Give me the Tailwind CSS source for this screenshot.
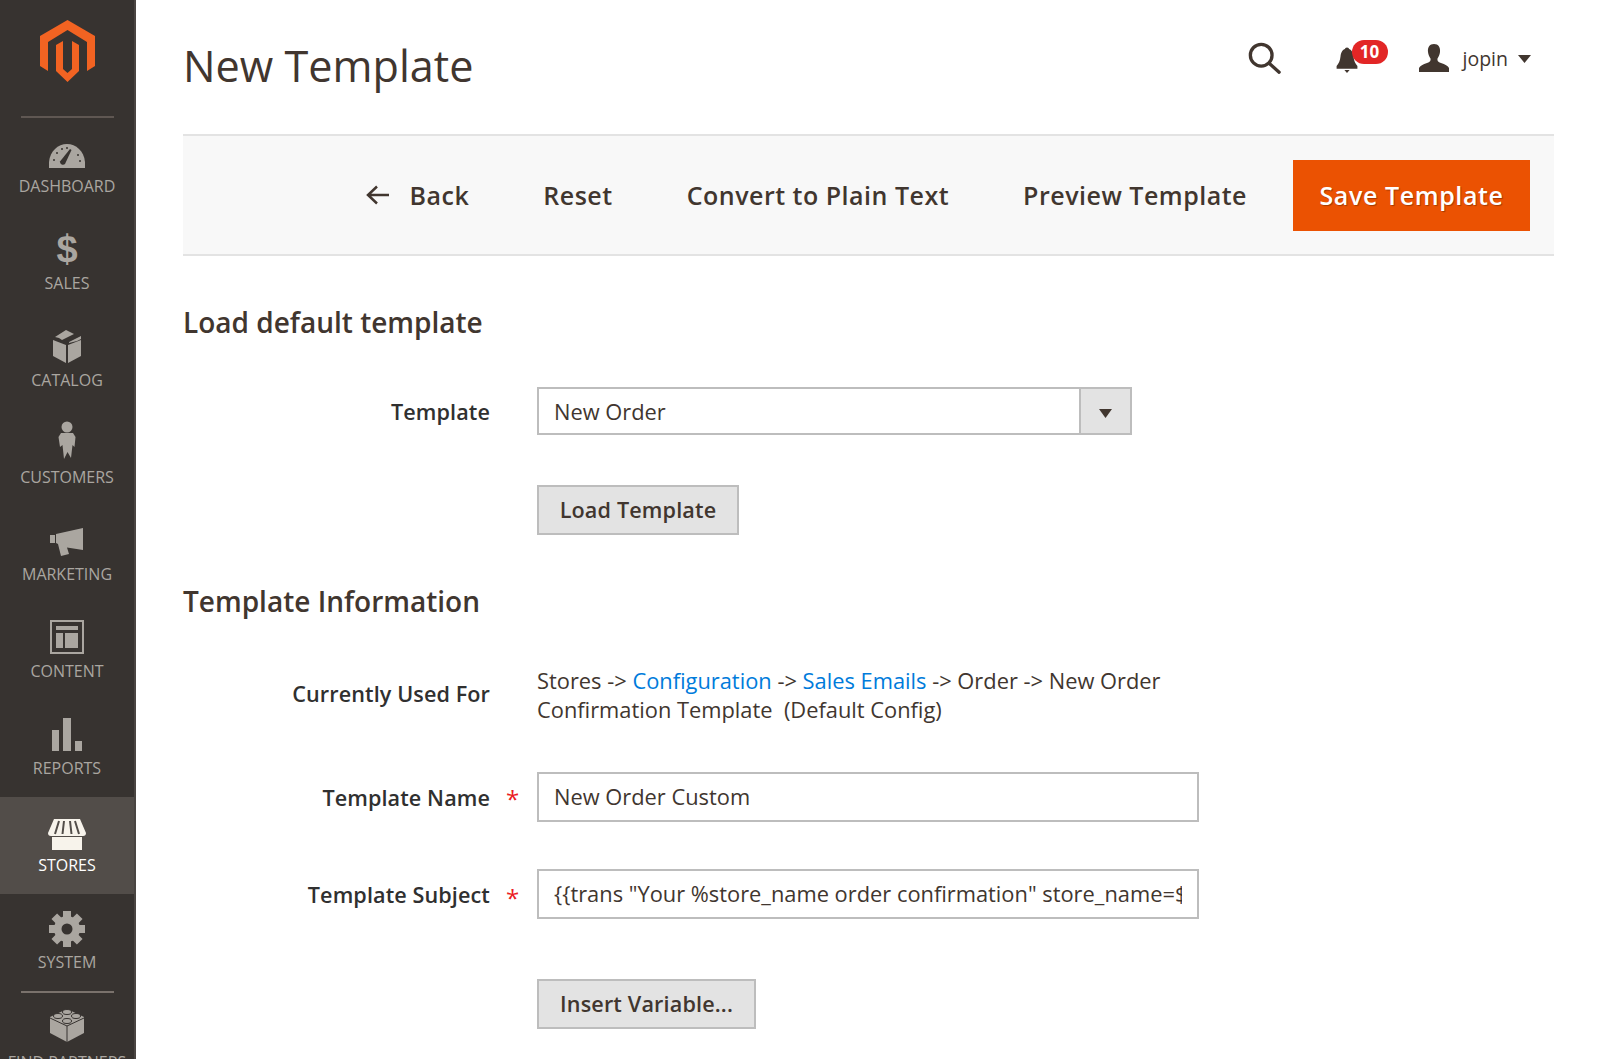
<!DOCTYPE html>
<html lang="en">
  <head>
    <meta charset="UTF-8" />
    <title>New Template</title>
    <script src="https://cdn.jsdelivr.net/npm/@tailwindcss/browser@4"></script>
  </head>
  <body class="bg-white h-[1059px] overflow-hidden flex font-['Open_Sans',sans-serif] text-[#41362f]">
    <!-- Sidebar -->
    <aside class="w-[136px] h-[1059px] shrink-0 bg-[#373330] border-r-2 border-[#4a4542] overflow-hidden flex flex-col items-center text-[#aaa6a0] text-[16px] leading-[20px]">
      <svg class="mt-[20px] w-[55px] h-[62px] shrink-0" viewBox="0 0 55 62">
        <path fill="#f26322" d="M27.500 0 55 16V46L47 51V22L27.500 10 8 22V51L0 46V16Z" />
        <path fill="#f26322" d="M16 25 23 21V49L27.500 53 32 49V21L39 25V51L27.500 62 16 51Z" />
      </svg>
      <div class="mt-[34px] w-[93px] h-[2px] shrink-0 bg-[#5f5752]"></div>

      <a class="w-full h-[97px] shrink-0 flex flex-col items-center">
        <div class="h-[58px] pt-[25px]">
          <svg class="w-[36px] h-[26px]" viewBox="0 0 36 26">
            <path fill="#aaa6a0" d="M0 25V19C1 8 9 1 18 1s17 7 18 18v6Z" />
            <path fill="#373330" d="M21 6 22.500 7 16 21a3 3 0 0 1-5-2.500Z" />
            <circle cx="5" cy="17" r="1" fill="#373330" /><circle cx="8" cy="10" r="1" fill="#373330" /><circle cx="13" cy="6" r="1" fill="#373330" /><circle cx="18" cy="5" r="1" fill="#373330" /><circle cx="29" cy="12" r="1" fill="#373330" /><circle cx="31" cy="18" r="1" fill="#373330" />
          </svg>
        </div>
        <span>DASHBOARD</span>
      </a>

      <a class="w-full h-[97px] shrink-0 flex flex-col items-center">
        <div class="h-[58px] pt-[17px] text-[38px] leading-[34px] font-['Liberation_Sans'] font-bold">$</div>
        <span>SALES</span>
      </a>

      <a class="w-full h-[97px] shrink-0 flex flex-col items-center">
        <div class="h-[58px] pt-[18px]">
          <svg class="w-[30px] h-[33px]" viewBox="0 0 30 33">
            <path fill="#aaa6a0" d="M14 0 22 4 10 10 7 8 3 7ZM17 12 29 6 29 9 25 11 17 13ZM1 10 14 15v18L1 26ZM16 15 29 10v16L16 33Z" />
          </svg>
        </div>
        <span>CATALOG</span>
      </a>

      <a class="w-full h-[97px] shrink-0 flex flex-col items-center">
        <div class="h-[58px] pt-[12px]">
          <svg class="w-[18px] h-[38px]" viewBox="0 0 18 38">
            <circle cx="9" cy="6" r="5.500" fill="#aaa6a0" />
            <path fill="#aaa6a0" d="M3 12H15L17.500 16 16.500 26 14.500 24 13 37 9.500 31 6 38 4.500 24 2 26 .5 16Z" />
          </svg>
        </div>
        <span>CUSTOMERS</span>
      </a>

      <a class="w-full h-[97px] shrink-0 flex flex-col items-center">
        <div class="h-[58px] pt-[22px]">
          <svg class="w-[34px] h-[28px]" viewBox="0 0 34 28">
            <path fill="#aaa6a0" d="M0 7H5V15H0ZM6 6 33 0V22L17 19.500 19 26 11 28 8 16 6 15Z" />
          </svg>
        </div>
        <span>MARKETING</span>
      </a>

      <a class="w-full h-[97px] shrink-0 flex flex-col items-center">
        <div class="h-[58px] pt-[17px]">
          <svg class="w-[34px] h-[34px]" viewBox="0 0 34 34">
            <path fill="none" stroke="#aaa6a0" stroke-width="2" d="M1 1H33V33H1Z" />
            <path fill="#aaa6a0" d="M6 6H28V10H6ZM6 13H13V28H6ZM15 13H28V28H15Z" />
          </svg>
        </div>
        <span>CONTENT</span>
      </a>

      <a class="w-full h-[97px] shrink-0 flex flex-col items-center">
        <div class="h-[58px] pt-[18px]">
          <svg class="w-[30px] h-[33px]" viewBox="0 0 30 33">
            <path fill="#aaa6a0" d="M0 12H7V33H0ZM11 0H19V33H11ZM23 23H30V33H23Z" />
          </svg>
        </div>
        <span>REPORTS</span>
      </a>

      <a class="w-full h-[97px] shrink-0 bg-[#524d49] text-white flex flex-col items-center">
        <div class="h-[58px] pt-[22px]">
          <svg class="w-[38px] h-[31px]" viewBox="0 0 38 31">
            <path fill="#f7f3eb" d="M6 0H32L38 14a3 3 0 0 1-3 3H3a3 3 0 0 1-3-3ZM4 18H34V31H4Z" />
            <path fill="none" stroke="#524d49" stroke-width="2" d="M11 2 7 15M16 2 14.500 15M22 2 23.500 15M27 2 31 15" />
          </svg>
        </div>
        <span>STORES</span>
      </a>

      <a class="w-full h-[97px] shrink-0 flex flex-col items-center">
        <div class="h-[58px] pt-[17px]">
          <svg class="w-[36px] h-[36px]" viewBox="-18 -18 36 36">
            <circle r="13" fill="#aaa6a0" />
            <path fill="#aaa6a0" d="M-4-18H4V-10H-4ZM-4 10H4V18H-4ZM-18-4H-10V4H-18ZM10-4H18V4H10Z" />
            <path fill="#aaa6a0" transform="rotate(45)" d="M-4-18H4V-10H-4ZM-4 10H4V18H-4ZM-18-4H-10V4H-18ZM10-4H18V4H10Z" />
            <circle r="5.500" fill="#373330" />
          </svg>
        </div>
        <span>SYSTEM</span>
      </a>

      <div class="w-[93px] h-[2px] shrink-0 bg-[#7a726c]"></div>

      <a class="mt-[14px] shrink-0 flex flex-col items-center">
        <svg class="w-[36px] h-[35px] mb-[10px]" viewBox="0 0 36 35">
          <path fill="#aaa6a0" d="M18 2 35 10V26L18 35 1 26V10Z" />
          <path fill="none" stroke="#373330" stroke-width="1" d="M1 11 18 19 35 11M18 19V35" />
          <ellipse cx="18" cy="5" rx="4.500" ry="2.500" fill="#aaa6a0" stroke="#373330" /><ellipse cx="9" cy="9" rx="4.500" ry="2.500" fill="#aaa6a0" stroke="#373330" /><ellipse cx="27" cy="9" rx="4.500" ry="2.500" fill="#aaa6a0" stroke="#373330" /><ellipse cx="18" cy="14" rx="4.500" ry="2.500" fill="#aaa6a0" stroke="#373330" />
        </svg>
        <span class="whitespace-nowrap">FIND PARTNERS</span>
      </a>
    </aside>

    <!-- Main -->
    <main class="flex-1 pl-[47px] pr-[46px]">
      <header class="h-[134px] flex items-start">
        <h1 class="mt-[36px] text-[43.2px] leading-[60px] flex-1">New Template</h1>
        <svg class="mt-[42px] mr-[55px] w-[33px] h-[33px]" viewBox="0 0 35 35">
          <circle cx="14" cy="14" r="11.500" fill="none" stroke="#41362f" stroke-width="3.500" />
          <path stroke="#41362f" stroke-width="3.500" stroke-linecap="round" d="M23 23 33 32" />
        </svg>
        <div class="relative mt-[40px] mr-[31px] w-[52px] h-[34px]">
          <svg class="absolute left-0 top-[7px] w-[22px] h-[26px]" viewBox="0 0 24 30">
            <circle cx="12" cy="3" r="2.500" fill="#41362f" />
            <path fill="#41362f" d="M12 2c5 0 7 4 7.500 9 .5 5 2 8 4.500 11v3H0v-3c2.500-3 4-6 4.500-11C5 6 7 2 12 2ZM9 26.500h6L12 30Z" />
          </svg>
          <span class="absolute left-[16px] top-0 w-[36px] h-[24px] rounded-full bg-[#e22626] text-white text-[17px] leading-[24px] font-bold text-center">10</span>
        </div>
        <svg class="mt-[44px] w-[30px] h-[28px]" viewBox="0 0 30 28">
          <path fill="#41362f" d="M15 0c4.500 0 6.500 3.500 6 8-.3 3-1.500 5-2.500 6.500-.5 2 .5 3.500 3.500 4.500 4 1.500 7 2.500 8 5v4H0v-4c1-2.500 4-3.500 8-5 3-1 4-2.500 3.500-4.500C10.500 13 9.300 11 9 8 8.500 3.500 10.500 0 15 0Z" />
        </svg>
        <span class="mt-[45px] ml-[14px] text-[19.5px] leading-[28px]">jopin</span>
        <svg class="mt-[55px] ml-[10px] mr-[23px] w-[13px] h-[8px]" viewBox="0 0 13 8"><path fill="#41362f" d="M0 0H13L6.500 8Z" /></svg>
      </header>

      <!-- Toolbar -->
      <div class="h-[122px] bg-[#f8f8f8] border-y-2 border-[#e3e3e3] flex items-center justify-end pr-[24px] text-[25px] leading-[34px] font-semibold tracking-[0.5px]">
        <svg class="mr-[21px] w-[23px] h-[20px]" viewBox="0 0 23 20">
          <path fill="none" stroke="#41362f" stroke-width="2.500" d="M23 10H2M11 1.500 2 10l9 8.500" />
        </svg>
        <span class="mr-[74px]">Back</span>
        <span class="mr-[74px]">Reset</span>
        <span class="mr-[74px]">Convert to Plain Text</span>
        <span class="mr-[46px]">Preview Template</span>
        <span class="w-[237px] h-[71px] bg-[#eb5202] text-white font-semibold tracking-[0.6px] [text-shadow:1px_1px_1px_rgba(0,0,0,0.3)] flex items-center justify-center">Save Template</span>
      </div>

      <h2 class="mt-[47px] text-[28px] leading-[38px] font-semibold">Load default template</h2>

      <div class="mt-[46px] flex items-center">
        <label class="w-[307px] pt-[2px] text-right text-[21.6px] font-semibold tracking-[0.1px] text-[#303030]">Template</label>
        <div class="ml-[47px] w-[595px] h-[48px] border-2 border-[#bdbdbd] flex text-[21.85px] leading-[46px]">
          <span class="flex-1 px-[15px]">New Order</span>
          <span class="w-[51px] bg-[#e3e3e3] border-l-2 border-[#bdbdbd] flex items-center justify-center">
            <svg class="w-[13px] h-[9px] mt-[4px]" viewBox="0 0 13 9"><path fill="#41362f" d="M0 0H13L6.500 9Z" /></svg>
          </span>
        </div>
      </div>

      <div class="mt-[50px] pl-[354px]">
        <button class="w-[202px] h-[50px] bg-[#e3e3e3] border-2 border-[#bdbdbd] text-[21.6px] font-semibold tracking-[0.15px]">Load Template</button>
      </div>

      <h2 class="mt-[47px] text-[28px] leading-[38px] font-semibold">Template Information</h2>

      <div class="mt-[46px] flex items-start">
        <label class="w-[307px] text-right text-[21.6px] leading-[29px] font-semibold tracking-[0.1px] text-[#303030] pt-[13px]">Currently Used For</label>
        <p class="ml-[47px] w-[640px] text-[21.85px] leading-[29px]">Stores -&gt; <a class="text-[#007bdb]">Configuration</a> -&gt; <a class="text-[#007bdb]">Sales Emails</a> -&gt; Order -&gt; New Order Confirmation Template&nbsp; (Default Config)</p>
      </div>

      <div class="mt-[48px] flex items-center">
        <label class="w-[307px] pt-[2px] text-right text-[21.6px] font-semibold tracking-[0.1px] text-[#303030]">Template Name</label>
        <span class="w-[47px] pl-[16px] pt-[4px] text-[24px] text-[#eb1c24] leading-[24px]">*</span>
        <div class="w-[662px] h-[50px] border-2 border-[#bdbdbd] px-[15px] text-[21.85px] leading-[46px]">New Order Custom</div>
      </div>

      <div class="mt-[47px] flex items-center">
        <label class="w-[307px] pt-[3px] text-right text-[21.6px] font-semibold tracking-[0.1px] text-[#303030]">Template Subject</label>
        <span class="w-[47px] pl-[16px] pt-[7px] text-[24px] text-[#eb1c24] leading-[24px]">*</span>
        <div class="w-[662px] h-[50px] border-2 border-[#bdbdbd] px-[15px] text-[21.85px] leading-[46px]">
          <div class="overflow-hidden whitespace-nowrap">{{trans "Your %store_name order confirmation" store_name=$store.getFrontendName()}}</div>
        </div>
      </div>

      <div class="mt-[60px] pl-[354px]">
        <button class="w-[219px] h-[50px] bg-[#e3e3e3] border-2 border-[#bdbdbd] text-[21.6px] font-semibold tracking-[0.15px]">Insert Variable...</button>
      </div>
    </main>
  </body>
</html>
